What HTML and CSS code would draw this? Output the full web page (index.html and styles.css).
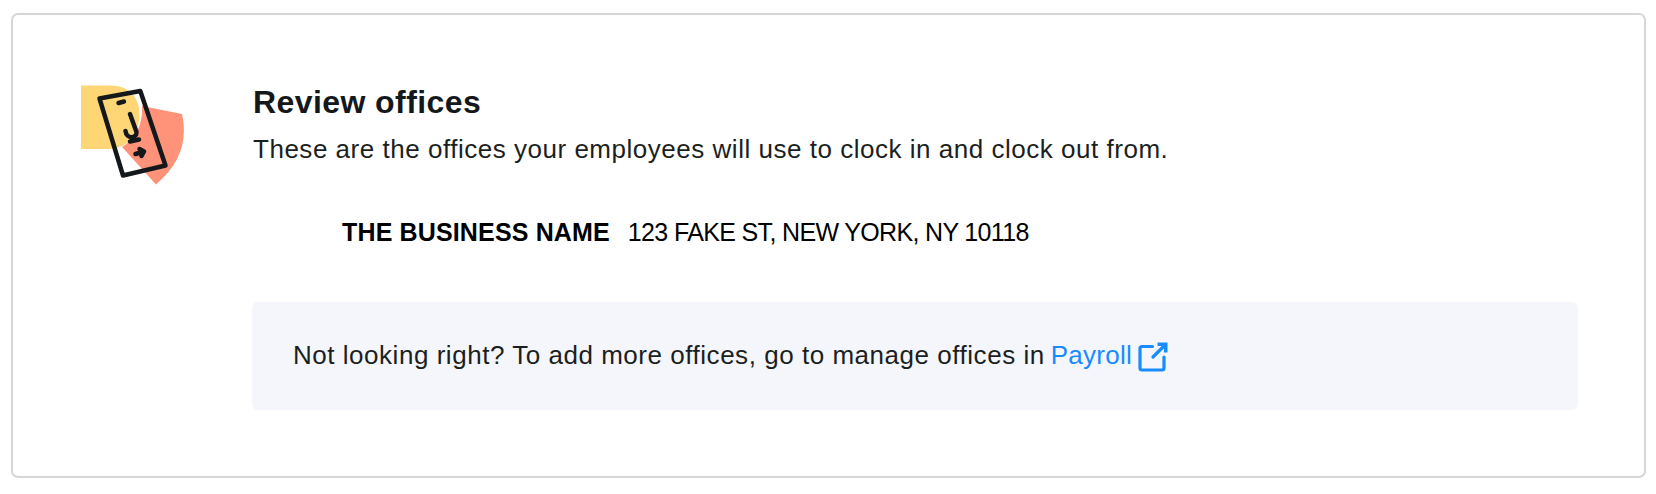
FILE: index.html
```
<!DOCTYPE html>
<html>
<head>
    <title>Review offices</title>
    <meta charset="utf-8">
    <link rel="stylesheet" href="styles.css">
</head>
<body>
<div class="card">
    <svg class="card-icon" width="106" height="102" viewBox="0 0 106 102">
        <path fill="#FED676" d="M0 .500H30C47 .500 58.500 12 58.500 29C58.500 49 47 64 26 64H0Z"/>
        <path fill="#FF937A" d="M61 21L101 29C107.500 58 97 81 75 99.500L41 62C55 54 62 39 61 21Z"/>
        <g fill="none" stroke="#14181b" stroke-width="4.500" stroke-linejoin="round" stroke-linecap="round">
            <path d="M18.500 13.500L59.300 6L84.500 80.500L42 90.500Z"/>
            <path d="M37.500 18L43 16.500"/>
            <path d="M49 29L55.500 47C56 54 45.500 54.500 44.500 46"/>
            <path d="M49 56.500L58 54.500"/>
            <path d="M54.500 69L63 66.500M58.500 64L63 66.500L60.500 71"/>
        </g>
    </svg>
    <div class="content">
        <h1 class="title">Review offices</h1>
        <p class="subtitle">These are the offices your employees will use to clock in and clock out from.</p>
        <div class="office">
            <span class="office-name">THE BUSINESS NAME</span>
            <span class="office-address">123 FAKE ST, NEW YORK, NY 10118</span>
        </div>
        <div class="note">
            <span class="note-text">Not looking right? To add more offices, go to manage offices in</span>
            <a class="note-link" href="#">Payroll</a>
            <svg class="link-icon" width="30" height="30" viewBox="0 0 30 30">
                <g fill="none" stroke="#188bff" stroke-width="3.200" stroke-linecap="round" stroke-linejoin="round">
                    <path d="M14.500 4.500H4A2 2 0 0 0 2 6.500V26A2 2 0 0 0 4 28H24A2 2 0 0 0 26 26V15"/>
                    <path d="M15 15L26 4"/>
                </g>
                <path fill="#188bff" d="M19.500 .500H29.500V10.500H26V4H19.500Z"/>
            </svg>
        </div>
    </div>
</div>
</body>
</html>
```

FILE: styles.css
```
body {
    margin: 0;
    background: #fff;
    font-family: "Liberation Sans", Arial, sans-serif;
    color: #1c1f22;
}
.card {
    display: flex;
    box-sizing: border-box;
    width: 1635px;
    height: 465px;
    margin: 13px 0 0 11px;
    padding: 70px 66px 0 68px;
    border: 2px solid #d5d6d8;
    border-radius: 7px;
}
.card-icon {
    flex: none;
    width: 106px;
    margin-right: 65px;
}
.content {
    flex: 1;
}
.title {
    margin: 0;
    padding-left: 1px;
    font-size: 32px;
    line-height: 34px;
    letter-spacing: 0.42px;
    color: #14181b;
    white-space: nowrap;
}
.subtitle {
    margin: 13px 0 0;
    padding-left: 1px;
    font-size: 26px;
    line-height: 34px;
    letter-spacing: 0.52px;
    white-space: nowrap;
}
.office {
    display: flex;
    gap: 18px;
    margin: 51px 0 0 90px;
    font-size: 25px;
    line-height: 30px;
    color: #000;
    white-space: nowrap;
}
.office-name {
    font-weight: bold;
    letter-spacing: 0.15px;
}
.office-address {
    letter-spacing: -0.65px;
}
.note {
    display: flex;
    align-items: center;
    box-sizing: border-box;
    height: 108px;
    margin-top: 55px;
    padding: 0 0 1px 41px;
    background: #f4f6fb;
    border-radius: 6px;
    font-size: 26px;
    white-space: nowrap;
}
.note-text {
    letter-spacing: 0.53px;
}
.note-link {
    margin-left: 6px;
    letter-spacing: 0.25px;
    color: #188bff;
    text-decoration: none;
}
.link-icon {
    margin: 2px 0 0 6px;
}
```
